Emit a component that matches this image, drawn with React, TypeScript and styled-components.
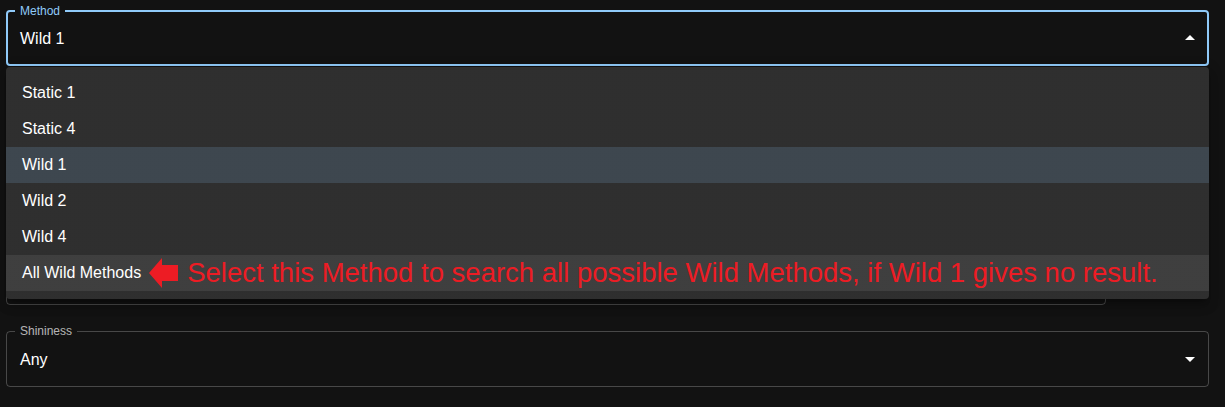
import React from "react";
import styled, { createGlobalStyle } from "styled-components";

const Global = createGlobalStyle`
  html, body { margin: 0; padding: 0; background: #121212; }
  body { font-family: "Liberation Sans", Arial, sans-serif; color: #fff; }
  * { box-sizing: border-box; }
`;

const Page = styled.div`
  position: relative;
  width: 1225px;
  height: 407px;
  overflow: hidden;
  background: #121212;
  padding: 10px 16px 0 6px;
`;

const Column = styled.div`
  display: flex;
  flex-direction: column;
  gap: 26px;
`;

const Field = styled.div<{ $focused?: boolean; $width?: string; $mt?: number }>`
  position: relative;
  flex: none;
  height: 56px;
  width: ${(p) => p.$width ?? "100%"};
  margin-top: ${(p) => p.$mt ?? 0}px;
  border-radius: 4px;
  border: ${(p) => (p.$focused ? "2px solid #90caf9" : "1px solid rgba(255,255,255,0.23)")};
  display: flex;
  align-items: center;
  padding: 0 ${(p) => (p.$focused ? 5 : 6)}px 0 ${(p) => (p.$focused ? 12 : 13)}px;
`;

const Label = styled.span<{ $focused?: boolean }>`
  position: absolute;
  top: -7px;
  left: ${(p) => (p.$focused ? 7 : 8)}px;
  padding: 0 5px;
  background: #121212;
  font-size: 12px;
  line-height: 12px;
  color: ${(p) => (p.$focused ? "#90caf9" : "rgba(255,255,255,0.7)")};
`;

const Value = styled.span`
  font-size: 16px;
  line-height: 23px;
  color: #fff;
  flex: 1;
`;

const Arrow = styled.svg<{ $up?: boolean }>`
  width: 24px;
  height: 24px;
  fill: #fff;
  transform: ${(p) => (p.$up ? "rotate(180deg)" : "none")};
`;

const Menu = styled.ul`
  position: absolute;
  top: 67px;
  left: 6px;
  width: 1203px;
  margin: 0;
  padding: 8px 0;
  list-style: none;
  border-radius: 4px;
  background-color: #121212;
  background-image: linear-gradient(rgba(255,255,255,0.12), rgba(255,255,255,0.12));
  box-shadow: 0 5px 5px -3px rgba(0,0,0,0.2), 0 8px 10px 1px rgba(0,0,0,0.14), 0 3px 14px 2px rgba(0,0,0,0.12);
`;

const Item = styled.li<{ $selected?: boolean; $hover?: boolean }>`
  height: 36px;
  display: flex;
  align-items: center;
  padding: 0 16px;
  font-size: 16px;
  line-height: 24px;
  color: #fff;
  background: ${(p) =>
    p.$selected ? "rgba(144,202,249,0.16)" : p.$hover ? "rgba(255,255,255,0.08)" : "transparent"};
`;

const Note = styled.span`
  display: flex;
  align-items: center;
  color: #ed1c24;
  font-size: 27.5px;
  line-height: 30px;
  margin-left: 8px;
  white-space: nowrap;
`;

const NoteArrow = styled.svg`
  width: 29px;
  height: 30px;
  margin-right: 9px;
  flex: none;
`;

const DropIcon = ({ up }: { up?: boolean }) => (
  <Arrow $up={up} viewBox="0 0 24 24">
    <path d="M7 10l5 5 5-5z" />
  </Arrow>
);

const methods = ["Static 1", "Static 4", "Wild 1", "Wild 2", "Wild 4"];

export default function App() {
  return (
    <Page>
      <Global />
      <Column>
        <Field $focused>
          <Label $focused>Method</Label>
          <Value>Wild 1</Value>
          <DropIcon up />
        </Field>
        <Field />
        <Field $width="1100px" $mt={75} />
        <Field>
          <Label>Shininess</Label>
          <Value>Any</Value>
          <DropIcon />
        </Field>
        <Field>
          <Label>Nature</Label>
          <Value>Any</Value>
          <DropIcon />
        </Field>
      </Column>
      <Menu>
        {methods.map((m) => (
          <Item key={m} $selected={m === "Wild 1"}>
            {m}
          </Item>
        ))}
        <Item $hover>
          All Wild Methods
          <Note>
            <NoteArrow viewBox="0 0 29 30">
              <polygon points="0,15 13,0 13,7 29,7 29,23 13,23 13,30" fill="#ed1c24" />
            </NoteArrow>
            Select this Method to search all possible Wild Methods, if Wild 1 gives no result.
          </Note>
        </Item>
      </Menu>
    </Page>
  );
}
